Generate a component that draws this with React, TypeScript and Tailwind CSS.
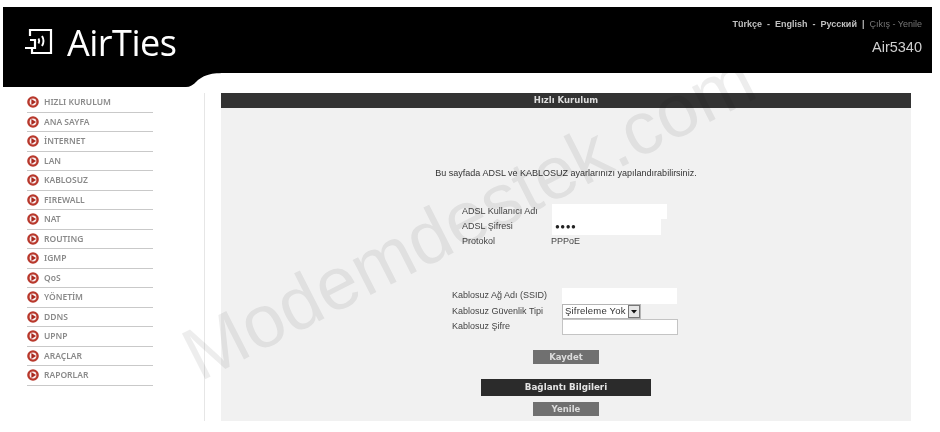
import React from 'react';

const menuItems = [
  'HIZLI KURULUM',
  'ANA SAYFA',
  'İNTERNET',
  'LAN',
  'KABLOSUZ',
  'FIREWALL',
  'NAT',
  'ROUTING',
  'IGMP',
  'QoS',
  'YÖNETİM',
  'DDNS',
  'UPNP',
  'ARAÇLAR',
  'RAPORLAR',
];

function MenuIcon() {
  return (
    <svg width="12" height="12" viewBox="0 0 12 12" className="shrink-0">
      <circle cx="6" cy="6" r="5.8" fill="#b8382c" />
      <circle cx="6" cy="6" r="3.4" fill="#f8eeee" />
      <path d="M4.4 2.9 L9 6 L4.4 9.1 Z" fill="#a8281f" />
    </svg>
  );
}

function Logo() {
  return (
    <svg width="29" height="30" viewBox="0 0 29 30" fill="none" stroke="white" strokeWidth="2.2" className="shrink-0">
      <path d="M6 8 V2 H27 V25 H8 V20" />
      <path d="M1 20 H11 V12 H6" />
      <path d="M14.5 10.5 Q16 13 14.5 15.5 M18 8 Q21 13 18 18" strokeWidth="1.9" />
    </svg>
  );
}

export default function App() {
  return (
    <div className="relative w-[940px] h-[432px] overflow-hidden bg-white blur-[0.35px] font-['Liberation_Sans',Arial,sans-serif]">
      <div className="pt-[7px] pl-[3px] pr-[8px]">
        {/* Header */}
        <header className="relative h-[66px] bg-black flex items-start justify-between">
          <div className="flex items-center gap-[14px] pl-[21px] pt-[14px]">
            <Logo />
            <span className="text-[36px] leading-[44px] font-medium text-white font-['Open_Sans',sans-serif] tracking-[-0.5px]">AirTies</span>
          </div>
          <div className="pr-[10px] pt-[11px] flex flex-col items-end">
            <div className="text-[9px] leading-[12px] text-[#bbbbbb]">
              <span className="font-bold text-[#c0c0c0]">Türkçe&nbsp; -&nbsp; English&nbsp; -&nbsp; Русский</span>
              <span className="font-bold">&nbsp; |&nbsp; </span>
              <span className="text-[#777777]">Çıkış - Yenile</span>
            </div>
            <div className="text-[14.5px] leading-[20px] mt-[7px] text-[#cfcfcf]">Air5340</div>
          </div>
          {/* Curved notch below the header */}
          <svg width="222" height="14" viewBox="0 0 222 14" className="absolute top-full left-0">
            <path d="M0 0 H222 C205 0 200 3 194 8 C190 12 187 14 183 14 H0 Z" fill="#000000" />
          </svg>
        </header>
      </div>

      <div className="flex pt-[20px] h-[348px]">
        {/* Sidebar */}
        <nav className="w-[205px] shrink-0 border-r border-[#e6e6e6] pl-[27px] pr-[51px]">
          <ul>
            {menuItems.map((item) => (
              <li key={item} className="h-[19.5px] flex items-center gap-[5px] border-b border-[#c9c9c9]">
                <MenuIcon />
                <span className="text-[8.5px] font-semibold text-[#8a8a8a] font-['Noto_Sans',sans-serif] leading-none">{item}</span>
              </li>
            ))}
          </ul>
        </nav>

        {/* Main panel */}
        <main className="ml-[16px] w-[690px] bg-[#f1f1f1] flex flex-col items-center">
          <div className="w-full h-[15px] bg-[#333333] text-center text-[8.5px] leading-[15px] font-bold text-[#dddddd] font-['DejaVu_Sans',sans-serif]">
            Hızlı Kurulum
          </div>
          <p className="mt-[59px] text-[9px] leading-[12px] text-[#333333]">
            Bu sayfada ADSL ve KABLOSUZ ayarlarınızı yapılandırabilirsiniz.
          </p>

          <div className="mt-[25px] w-full pl-[241px] text-[9px] text-[#444444]">
            <div className="flex items-center h-[15px]">
              <span className="w-[90px]">ADSL Kullanıcı Adı</span>
              <div className="w-[115px] h-[15px] bg-white" />
            </div>
            <div className="flex items-center h-[16px]">
              <span className="w-[90px]">ADSL Şifresi</span>
              <div className="w-[109px] h-[16px] bg-white pl-[3px] text-[8px] tracking-[0.5px] text-[#222222] leading-[16px]">●●●●</div>
            </div>
            <div className="flex items-center h-[14px]">
              <span className="w-[89px]">Protokol</span>
              <span>PPPoE</span>
            </div>
          </div>

          <div className="mt-[39px] w-full pl-[231px] text-[9px] text-[#444444]">
            <div className="flex items-center h-[16px]">
              <span className="w-[110px]">Kablosuz Ağ Adı (SSID)</span>
              <div className="w-[115px] h-[16px] bg-white" />
            </div>
            <div className="flex items-center h-[15px]">
              <span className="w-[110px]">Kablosuz Güvenlik Tipi</span>
              <div className="w-[79px] h-[15px] flex items-center justify-between bg-white border border-[#b5b5b5] pl-[2px] text-[9.5px] tracking-[0.2px] text-[#333333]">
                <span>Şifreleme Yok</span>
                <span className="w-[12px] h-[13px] bg-[#e6e6e6] border border-[#777777] flex items-center justify-center">
                  <svg width="6" height="4" viewBox="0 0 6 4"><path d="M0 0 H6 L3 3.5 Z" fill="#111111" /></svg>
                </span>
              </div>
            </div>
            <div className="flex items-center h-[16px]">
              <span className="w-[110px]">Kablosuz Şifre</span>
              <div className="w-[116px] h-[16px] bg-white border border-[#c4c4c4]" />
            </div>
          </div>

          <button className="mt-[15px] w-[66px] h-[14px] bg-[#707070] text-[8.5px] leading-[14px] font-bold text-[#dcdcdc] font-['DejaVu_Sans',sans-serif]">
            Kaydet
          </button>
          <div className="mt-[15px] w-[170px] h-[17px] bg-[#2b2b2b] text-center text-[8.75px] leading-[17px] font-bold text-[#e4e4e4] font-['DejaVu_Sans',sans-serif]">
            Bağlantı Bilgileri
          </div>
          <button className="mt-[6px] w-[66px] h-[14px] bg-[#707070] text-[8.5px] leading-[14px] font-bold text-[#dcdcdc] font-['DejaVu_Sans',sans-serif]">
            Yenile
          </button>
        </main>
      </div>

      {/* Watermark over the page */}
      <div className="absolute left-[469px] top-[217px] -translate-x-1/2 -translate-y-1/2 -rotate-[27deg] whitespace-nowrap pointer-events-none text-[74.5px] leading-none text-black/[0.07] font-['Liberation_Sans',sans-serif]">
        Modemdestek.com
      </div>
    </div>
  );
}
